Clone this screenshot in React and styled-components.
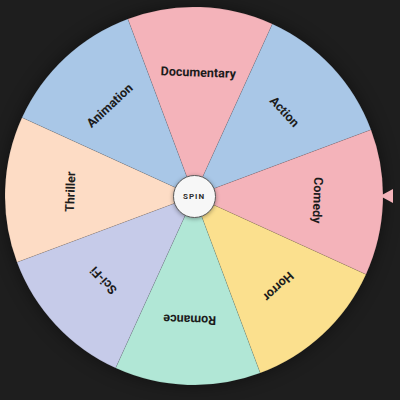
import React from 'react'
import styled, { createGlobalStyle } from 'styled-components'

const GlobalStyle = createGlobalStyle`
  body {
    margin: 0;
    background: #1e1e1e;
    font-family: Roboto, "Liberation Sans", Arial, sans-serif;
  }
`

const Page = styled.div`
  width: 400px;
  height: 400px;
  display: flex;
  align-items: flex-start;
  justify-content: flex-start;
  padding: 7px 0 0 5px;
  box-sizing: border-box;
`

const WheelWrap = styled.div`
  position: relative;
  width: 378px;
  height: 378px;
  border-radius: 50%;
  box-shadow: 0 0 18px rgba(0, 0, 0, 0.45);
`

const Disc = styled.svg`
  display: block;
  width: 100%;
  height: 100%;
`

const Label = styled.text`
  font-family: Roboto, "Liberation Sans", Arial, sans-serif;
  font-weight: 700;
  font-size: 12.5px;
  fill: #1c1c1c;
`

const SpinButton = styled.button`
  position: absolute;
  left: 50%;
  top: 50%;
  width: 43px;
  height: 43px;
  margin: -21.5px 0 0 -21.5px;
  border-radius: 50%;
  border: 1.5px solid #5a5a5a;
  background: #f7f7f7;
  box-shadow: 0 1px 4px rgba(0, 0, 0, 0.35);
  font-family: Roboto, "Liberation Sans", Arial, sans-serif;
  font-weight: 700;
  font-size: 8px;
  letter-spacing: 1px;
  color: #2e2e2e;
  padding: 0;
  cursor: pointer;
`

const Pointer = styled.div`
  position: absolute;
  right: -10px;
  top: 182px;
  width: 0;
  height: 0;
  border-top: 7px solid transparent;
  border-bottom: 7px solid transparent;
  border-right: 13px solid #f4b3ba;
`

const genres = [
  { name: 'Documentary', color: '#f4b3ba' },
  { name: 'Action', color: '#a9c7e7' },
  { name: 'Comedy', color: '#f4b3ba' },
  { name: 'Horror', color: '#fbe08e' },
  { name: 'Romance', color: '#b1e7d6' },
  { name: 'Sci-Fi', color: '#c6cbe9' },
  { name: 'Thriller', color: '#fddcc5' },
  { name: 'Animation', color: '#a9c7e7' },
]

const R = 189
const C = 189
const TILT = 2

const point = (deg, r) => {
  const rad = ((deg - 90) * Math.PI) / 180
  return [C + r * Math.cos(rad), C + r * Math.sin(rad)]
}

const slicePath = (mid, span) => {
  const [x1, y1] = point(mid - span / 2, R)
  const [x2, y2] = point(mid + span / 2, R)
  return `M${C} ${C} L${x1} ${y1} A${R} ${R} 0 0 1 ${x2} ${y2} Z`
}

const App = () => {
  const span = 360 / genres.length
  return (
    <>
      <GlobalStyle />
      <Page>
        <WheelWrap>
          <Disc viewBox="0 0 378 378">
            {genres.map((g, i) => {
              const mid = i * span + TILT
              return (
                <g key={g.name}>
                  <path d={slicePath(mid, span)} fill={g.color} stroke="rgba(0,0,0,0.12)" strokeWidth="0.6" />
                  <Label
                    x={C}
                    y={C - 124}
                    textAnchor="middle"
                    dominantBaseline="central"
                    transform={`rotate(${mid} ${C} ${C})`}
                  >
                    {g.name}
                  </Label>
                </g>
              )
            })}
          </Disc>
          <SpinButton>SPIN</SpinButton>
          <Pointer />
        </WheelWrap>
      </Page>
    </>
  )
}

export default App
